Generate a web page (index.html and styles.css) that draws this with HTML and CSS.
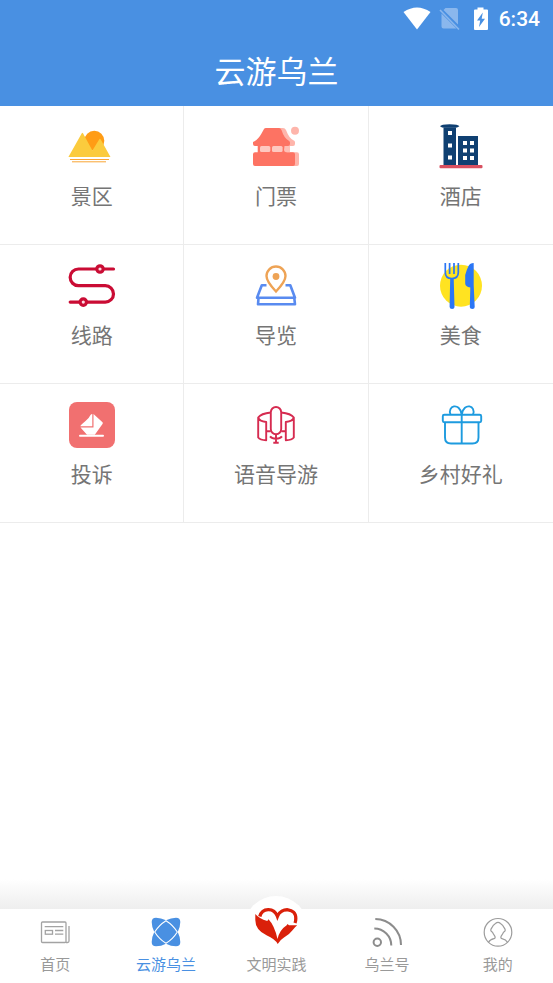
FILE: index.html
```html
<!DOCTYPE html>
<html lang="zh-CN">
<head>
<meta charset="utf-8">
<meta name="viewport" content="width=device-width, initial-scale=1">
<title>云游乌兰</title>
<link rel="stylesheet" href="styles.css">
</head>
<body>
<header class="top">
  <div class="status">
    <svg class="wifi" width="28" height="24" viewBox="0 0 28 24"><path d="M0.500 5Q14-4 27.500 5L14 22.500Z" fill="#fff"/></svg>
    <svg class="sim" width="22" height="24" viewBox="0 0 22 24"><path d="M6.500 1H17a2 2 0 0 1 2 2V17.500L4.500 3ZM2.500 6.500 17.500 21.500H4.500a2 2 0 0 1-2-2Z" fill="#8ab7ed"/><path d="M1 3 20 22.500" stroke="#8ab7ed" stroke-width="1.600"/></svg>
    <svg class="battery" width="16" height="24" viewBox="0 0 16 24"><path d="M4.500 0.500h6V2.500H14a1 1 0 0 1 1 1V22a1 1 0 0 1-1 1H2a1 1 0 0 1-1-1V3.500a1 1 0 0 1 1-1H4.500Z" fill="#fff"/><path d="M9.800 5.500 4 13.500H7.200L6 20 12 11.700H8.700Z" fill="#4990e2"/></svg>
    <span class="time">6:34</span>
  </div>
  <h1 class="title">云游乌兰</h1>
</header>

<main class="content">
  <div class="grid">
    <a class="cell" href="#">
      <svg class="icon" viewBox="0 0 46 46"><circle cx="25.300" cy="16.700" r="10" fill="#ff9c15"/><path d="M-.6 33 12.800 9.300q.6-1 1.200 0L23.400 26.500 30.300 15.300q.7-1 1.300 0L41.500 33Z" fill="#fbcb3d"/><path d="M1 35.500H40M3 37.800H37" stroke="#f9a535" stroke-width="1"/></svg>
      <span class="label">景区</span>
    </a>
    <a class="cell" href="#">
      <svg class="icon" viewBox="0 0 46 46"><path d="M16 4H30q2 0 3 2 3 8 7 10 2 1 2 2v2q0 2-2 2H37v6.300h7q2 0 2 2V40q0 2-2 2H30V28.300h4V22H20Z" fill="#feb5ab"/><path d="M13 4H26q1.500 0 2.500 2 2.500 8 7 10.500 1.500.8 1.500 2v1.500q0 2-2 2H34v6.300h6q2 0 2 2V40q0 2-2 2H2q-2 0-2-2V30.300q0-2 2-2H4.700V22H2Q0 22 0 20v-2q5-2 8.500-8.500L11 5Q11.500 4 13 4Z" fill="#fd7363"/><rect x="7" y="22" width="10.300" height="6" rx="1.500" fill="#fec8c0"/><rect x="19" y="22" width="10.600" height="6" rx="1.500" fill="#fec8c0"/><path d="M31.500 22H37v6.300H33Q31 28 31 26Z" fill="#fec0b7"/><circle cx="42" cy="6.700" r="4" fill="#feb5ab"/></svg>
      <span class="label">门票</span>
    </a>
    <a class="cell" href="#">
      <svg class="icon" viewBox="0 0 46 46"><path d="M5.500 3.500H18V41H5.500ZM20 12H40V41H20Z" fill="#0f4072"/><path d="M2 2.300Q3 .3 11.700.3T21.400 2.300Q19 3.800 17 3.800H6.500Q4 3.800 2 2.300Z" fill="#0f4072"/><path d="M10 7h4v4h-4zM10 19.500h4v4h-4zM10 31.500h4v4h-4zM25 17h4v4h-4zM32 17h4v4h-4zM25 24.500h4v4h-4zM32 24.500h4v4h-4zM25 32h4v4h-4zM32 32h4v4h-4z" fill="#fff"/><rect x="1.500" y="41" width="43" height="3.200" rx="1" fill="#d85060"/></svg>
      <span class="label">酒店</span>
    </a>
    <a class="cell" href="#">
      <svg class="icon" viewBox="0 0 46 46" fill="none" stroke="#ca0c34" stroke-width="3.200" stroke-linecap="round"><path d="M44.500 6H9.500a8.350 8.350 0 0 0 0 16.700H36.300a8.200 8.200 0 0 1 0 16.400H1.200"/><circle cx="31" cy="6" r="3.200" fill="#fbdce3"/><circle cx="14.300" cy="39.100" r="3.200" fill="#fbdce3"/></svg>
      <span class="label">线路</span>
    </a>
    <a class="cell" href="#">
      <svg class="icon" viewBox="0 0 46 46" fill="none"><path d="M13.500 22.200H8.800L4 34.800H42L37.300 22.200H32.500M5.500 35 5 41.300H42L41.300 35" stroke="#598bf0" stroke-width="2.600" stroke-linejoin="round"/><path d="M23 28.500Q13.500 18.500 13.500 13a9.500 9.500 0 0 1 19 0Q32.500 18.500 23 28.500Z" fill="#fff" stroke="#eea355" stroke-width="2.400"/><circle cx="23" cy="13.500" r="3.400" fill="#eea355"/></svg>
      <span class="label">导览</span>
    </a>
    <a class="cell" href="#">
      <svg class="icon" viewBox="0 0 46 46"><circle cx="23" cy="22.700" r="21" fill="#ffe321"/><path d="M7.300 0V9.500Q7.300 15.500 13.800 15.500T20.300 9.500V0M11.600 0V11M16 0V11" fill="none" stroke="#2b76f5" stroke-width="1.700"/><path d="M12.200 15h3.500L16.500 44q0 2-2.400 2t-2.500-2ZM35.700 0V22L36.700 44q0 2-2.400 2T31.800 44L32.300 24.500Q27.200 23.500 27.200 20.500V12Q28.500 7 30.500 3 32 0 35.700 0Z" fill="#2b76f5"/></svg>
      <span class="label">美食</span>
    </a>
    <a class="cell" href="#">
      <svg class="icon" viewBox="0 0 46 46"><rect width="46" height="46" rx="8" fill="#f17070"/><path d="M23.300 12V24.300H11.300Q12 22.500 16 19.500T21.500 13Q22.500 11.800 23.300 12ZM24.500 12 33.500 20.300q.7.800 0 1.700L25.800 32.700H18L11.500 25.500H24.500Z" fill="#fff"/><path d="M11 33.700H34" stroke="#fff" stroke-width="2" stroke-linecap="round"/></svg>
      <span class="label">投诉</span>
    </a>
    <a class="cell" href="#">
      <svg class="icon" viewBox="0 0 46 46" fill="none" stroke="#d62b50" stroke-width="1.900" stroke-linejoin="round"><rect x="17.800" y="5" width="10.400" height="27.300" rx="5.200"/><path d="M17.800 10.500Q8 11.500 5.200 15.500V35.500Q7 38 13.200 38.300V20Q6 19 5.200 15.500M13.200 29.200H17.800M28.200 10.500Q38 11.500 40.800 15.500V35.500Q39 38 32.800 38.300V20Q40 19 40.800 15.500M32.800 29.200H28.200M17 34.300Q19 36.700 23 36.700T29 34.300M23 33V40.700M20.300 40.700H25.700"/></svg>
      <span class="label">语音导游</span>
    </a>
    <a class="cell" href="#">
      <svg class="icon" viewBox="0 0 46 46" fill="none" stroke="#1d9bdf" stroke-width="1.900" stroke-linejoin="round"><rect x="4.800" y="12.800" width="38.400" height="7.400" rx="1.500"/><path d="M7 20.500V35.500Q7 41.500 13 41.500H34.500Q40.500 41.500 40.500 35.500V20.500M23.700 12.500V41.500M12.500 12.500C9 4 21.500-.5 23.700 12.500 26-.5 38.500 4 35 12.500"/></svg>
      <span class="label">乡村好礼</span>
    </a>
  </div>
</main>

<nav class="tabs">
  <a class="tab" href="#">
    <svg class="tab-icon" viewBox="0 0 30 30" fill="none" stroke="#a3a3a3" stroke-width="1.300"><rect x="1.500" y="5" width="24.500" height="20.500" rx="1"/><path d="M26 25.500h1.500q1.500 0 1.500-1.500V9M4.700 9.700H23.300M15 13.500H23.300M15 17.200H23.300"/><rect x="5.300" y="13.500" width="7.200" height="3.700"/></svg>
    <span>首页</span>
  </a>
  <a class="tab active" href="#" aria-current="page">
    <svg class="tab-icon" viewBox="0 0 30 30"><path d="M15 3.300Q20 .7 25 .7 29.300.7 29.300 5 29.300 10 26.700 15 29.300 20 29.300 25 29.300 29.300 25 29.300 20 29.300 15 26.700 10 29.300 5 29.300.7 29.300.7 25 .7 20 3.300 15 .7 10 .7 5 .7.700 5 .7 10 .7 15 3.300Z" fill="#4990e2"/><path d="M15 3.700Q22 8 26.300 15 22 22 15 26.300 8 22 3.700 15 8 8 15 3.700Z" fill="none" stroke="#fff" stroke-width="1.100"/></svg>
    <span>云游乌兰</span>
  </a>
  <a class="tab raised" href="#">
    <svg class="tab-icon heart" viewBox="0 0 46 46"><path d="M6.800 13.500C9 4.500 21 4 24.400 13.300 28 4 43 4.500 42.800 15.500Q42.800 18 42 20" fill="none" stroke="#da200a" stroke-width="3.300"/><path d="M2.300 11Q6 15.500 14.300 18L15.500 16.300Q21.500 22.500 24.500 36 26.500 27 33.700 22.300L34.500 21 36 22.300H44.200Q42 24 39.500 27.300 36 32 31 34.500 27.500 36.500 24.700 41 22 36 13.500 32.300 2.300 27 2.300 17Z" fill="#da200a"/></svg>
    <span>文明实践</span>
  </a>
  <a class="tab" href="#">
    <svg class="tab-icon" viewBox="0 0 30 30" fill="none" stroke="#8c8c8c" stroke-width="2"><circle cx="5.300" cy="25.300" r="3.700"/><path d="M2.300 11.500A17 17 0 0 1 19.300 28.500M3.300 2A26 26 0 0 1 29 28"/></svg>
    <span>乌兰号</span>
  </a>
  <a class="tab" href="#">
    <svg class="tab-icon" viewBox="0 0 30 30" fill="none" stroke="#9c9c9c" stroke-width="1.200" stroke-linejoin="round"><circle cx="15" cy="15.300" r="13.800"/><path d="M5.500 25.300Q7 22.500 11 21.700 13 21 11.500 18.700 10.300 17 9.500 15.300 6.500 13.500 8.700 11 10 8 12.500 6.500 15 4.300 17.500 6.500 20 8 21.300 11 23.500 13.500 20.500 15.300 19.700 17 18.500 18.700 17 21 19 21.700 23 22.500 24.500 25.300"/></svg>
    <span>我的</span>
  </a>
</nav>
</body>
</html>
```
FILE: styles.css
```css
* {
  box-sizing: border-box;
}

body {
  margin: 0;
  min-height: 100vh;
  display: flex;
  flex-direction: column;
  background: #fff;
  font-family: "Noto Sans CJK SC", sans-serif;
}

a {
  text-decoration: none;
}

svg {
  display: block;
  overflow: visible;
}

.top {
  padding-bottom: 4px;
  background: #4990e2;
  color: #fff;
}

.status {
  display: flex;
  align-items: center;
  justify-content: flex-end;
  height: 38px;
  padding-right: 13px;
}

.wifi {
  margin-right: 8px;
}

.sim {
  margin-right: 12px;
}

.battery {
  margin-right: 10px;
}

.time {
  font: 500 21px/24px Roboto, sans-serif;
}

.title {
  margin: 0;
  font-size: 31px;
  font-weight: 400;
  line-height: 64px;
  text-align: center;
}

.content {
  flex: 1;
}

.grid {
  display: grid;
  grid-template-columns: repeat(3, 1fr);
}

.cell {
  display: flex;
  flex-direction: column;
  align-items: center;
  gap: 10px;
  padding: 18px 0 34px;
  border-right: 1px solid #ececec;
  border-bottom: 1px solid #ececec;
  color: #757575;
}

.cell:nth-child(3n) {
  border-right: 0;
}

.icon {
  width: 46px;
  height: 46px;
}

.label {
  font-size: 21px;
  line-height: 30px;
}

.tabs {
  position: relative;
  display: flex;
  padding: 8px 0 9px;
  background: #fff;
}

.tabs::before {
  content: "";
  position: absolute;
  right: 0;
  bottom: 100%;
  left: 0;
  height: 30px;
  background: linear-gradient(#fff, #eee);
}

.tab {
  position: relative;
  flex: 1;
  display: flex;
  flex-direction: column;
  align-items: center;
  gap: 7px;
  color: #999;
  font-size: 15px;
  line-height: 20px;
}

.active {
  color: #4990e2;
}

.tab-icon {
  width: 30px;
  height: 30px;
}

.raised::before {
  content: "";
  position: absolute;
  top: -21px;
  left: 50%;
  width: 64px;
  height: 64px;
  margin-left: -32px;
  border-radius: 50%;
  background: #fff;
}

.raised > * {
  position: relative;
}

.heart {
  width: 46px;
  height: 46px;
  margin: -14px 0 -2px;
}
```
